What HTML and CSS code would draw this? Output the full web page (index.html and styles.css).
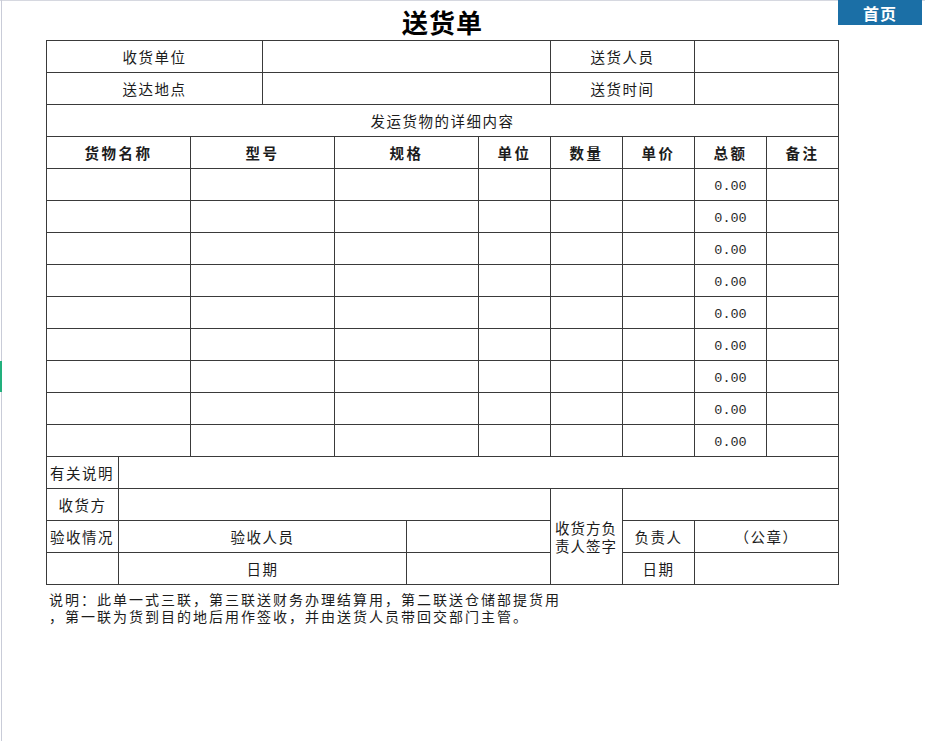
FILE: index.html
```html
<!DOCTYPE html>
<html lang="zh-CN">
<head>
<meta charset="utf-8">
<title>送货单</title>
<link rel="stylesheet" href="styles.css">
</head>
<body>
<div class="sheet">
  <h1 class="title">送货单</h1>
  <div class="form">
    <div class="c s3">收货单位</div>
    <div class="c s4"></div>
    <div class="c s2">送货人员</div>
    <div class="c s2"></div>

    <div class="c s3">送达地点</div>
    <div class="c s4"></div>
    <div class="c s2">送货时间</div>
    <div class="c s2"></div>

    <div class="c s11">发运货物的详细内容</div>

    <div class="c s2 h">货物名称</div>
    <div class="c s2 h">型号</div>
    <div class="c s2 h">规格</div>
    <div class="c h">单位</div>
    <div class="c h">数量</div>
    <div class="c h">单价</div>
    <div class="c h">总额</div>
    <div class="c h">备注</div>

    <div class="c s2"></div><div class="c s2"></div><div class="c s2"></div><div class="c"></div><div class="c"></div><div class="c"></div><div class="c num">0.00</div><div class="c"></div>
    <div class="c s2"></div><div class="c s2"></div><div class="c s2"></div><div class="c"></div><div class="c"></div><div class="c"></div><div class="c num">0.00</div><div class="c"></div>
    <div class="c s2"></div><div class="c s2"></div><div class="c s2"></div><div class="c"></div><div class="c"></div><div class="c"></div><div class="c num">0.00</div><div class="c"></div>
    <div class="c s2"></div><div class="c s2"></div><div class="c s2"></div><div class="c"></div><div class="c"></div><div class="c"></div><div class="c num">0.00</div><div class="c"></div>
    <div class="c s2"></div><div class="c s2"></div><div class="c s2"></div><div class="c"></div><div class="c"></div><div class="c"></div><div class="c num">0.00</div><div class="c"></div>
    <div class="c s2"></div><div class="c s2"></div><div class="c s2"></div><div class="c"></div><div class="c"></div><div class="c"></div><div class="c num">0.00</div><div class="c"></div>
    <div class="c s2"></div><div class="c s2"></div><div class="c s2"></div><div class="c"></div><div class="c"></div><div class="c"></div><div class="c num">0.00</div><div class="c"></div>
    <div class="c s2"></div><div class="c s2"></div><div class="c s2"></div><div class="c"></div><div class="c"></div><div class="c"></div><div class="c num">0.00</div><div class="c"></div>
    <div class="c s2"></div><div class="c s2"></div><div class="c s2"></div><div class="c"></div><div class="c"></div><div class="c"></div><div class="c num">0.00</div><div class="c"></div>

    <div class="c left">有关说明</div>
    <div class="c s10"></div>

    <div class="c">收货方</div>
    <div class="c s6"></div>
    <div class="c r3 sig">收货方负责人签字</div>
    <div class="c s3"></div>

    <div class="c left">验收情况</div>
    <div class="c s4">验收人员</div>
    <div class="c s2"></div>
    <div class="c">负责人</div>
    <div class="c s2">（公章）</div>

    <div class="c"></div>
    <div class="c s4">日期</div>
    <div class="c s2"></div>
    <div class="c">日期</div>
    <div class="c s2"></div>
  </div>
  <p class="note">说明：此单一式三联，第三联送财务办理结算用，第二联送仓储部提货用<br>，第一联为货到目的地后用作签收，并由送货人员带回交部门主管。</p>
</div>
<a class="home-btn" href="#">首页</a>
</body>
</html>
```

FILE: styles.css
```css
html, body {
  margin: 0;
  padding: 0;
}

body {
  width: 925px;
  height: 741px;
  overflow: hidden;
  position: relative;
  background-color: #ffffff;
  background-image:
    linear-gradient(#22b07d, #22b07d),
    linear-gradient(#c9ccd8, #c9ccd8),
    linear-gradient(#d6d8e0, #d6d8e0);
  background-size: 2px 31px, 1px 100%, 100% 1px;
  background-position: 0 361px, 1px 0, 0 0;
  background-repeat: no-repeat;
  font-family: "Noto Sans CJK SC", "Noto Sans", sans-serif;
  color: #1c1c1c;
}

.sheet {
  padding-left: 46px;
}

.title {
  margin: 0;
  width: 793px;
  height: 40px;
  display: flex;
  align-items: center;
  justify-content: center;
  padding-top: 3px;
  box-sizing: border-box;
  font-size: 26px;
  font-weight: 700;
  letter-spacing: 1px;
  color: #000;
}

.form {
  display: grid;
  grid-template-columns: repeat(11, 72px);
  grid-auto-rows: 32px;
  width: max-content;
  border-left: 1px solid #3a3a3a;
  border-top: 1px solid #3a3a3a;
}

.c {
  box-sizing: border-box;
  border-right: 1px solid #3a3a3a;
  border-bottom: 1px solid #3a3a3a;
  display: flex;
  align-items: center;
  justify-content: center;
  font-size: 14.5px;
  letter-spacing: 1.5px;
  line-height: 18px;
  white-space: nowrap;
}

.s2 { grid-column: span 2; }
.s3 { grid-column: span 3; }
.s4 { grid-column: span 4; }
.s6 { grid-column: span 6; }
.s10 { grid-column: span 10; }
.s11 { grid-column: span 11; }
.r3 { grid-row: span 3; }

.h {
  font-weight: 700;
  letter-spacing: 2.5px;
}

.left {
  justify-content: flex-start;
  padding-left: 3px;
}

.num {
  font-family: "Liberation Mono", monospace;
  font-size: 13.5px;
  letter-spacing: 0;
  padding-top: 5px;
  color: #2a2a2a;
}

.sig {
  white-space: normal;
  justify-content: flex-start;
  padding: 0 2px 0 4px;
  line-height: 18px;
  letter-spacing: 1px;
}

.note {
  margin: 0;
  padding: 6px 0 0 3px;
  font-size: 14px;
  letter-spacing: 2px;
  line-height: 17px;
  color: #1c1c1c;
}

.home-btn {
  position: absolute;
  left: 838px;
  top: 0;
  width: 84px;
  height: 25px;
  display: flex;
  align-items: center;
  justify-content: center;
  background: #1b6fa6;
  color: #ffffff;
  text-decoration: none;
  font-size: 16px;
  font-weight: 700;
  letter-spacing: 1px;
}
```
